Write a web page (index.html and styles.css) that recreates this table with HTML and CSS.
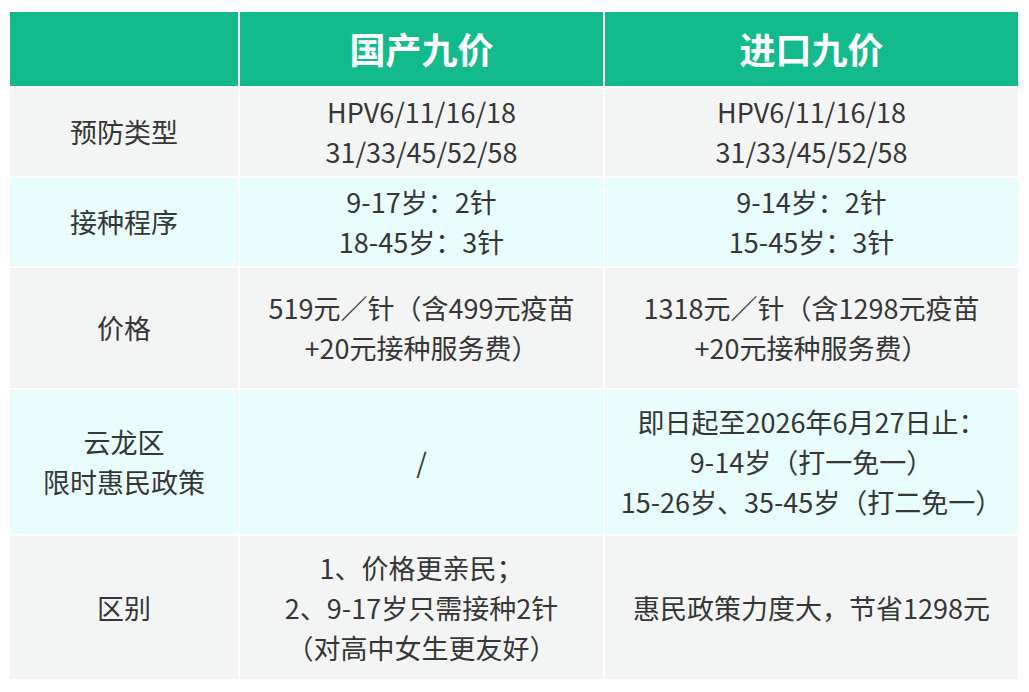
FILE: index.html
```html
<!DOCTYPE html>
<html lang="zh-CN">
<head>
<meta charset="utf-8">
<link rel="stylesheet" href="styles.css">
</head>
<body>
<div class="table">
  <div class="cell head"></div>
  <div class="cell head">国产九价</div>
  <div class="cell head">进口九价</div>

  <div class="cell gray">预防类型</div>
  <div class="cell gray">HPV6/11/16/18<br>31/33/45/52/58</div>
  <div class="cell gray">HPV6/11/16/18<br>31/33/45/52/58</div>

  <div class="cell cyan">接种程序</div>
  <div class="cell cyan">9-17岁：2针<br>18-45岁：3针</div>
  <div class="cell cyan">9-14岁：2针<br>15-45岁：3针</div>

  <div class="cell gray">价格</div>
  <div class="cell gray">519元／针（含499元疫苗<br>+20元接种服务费）</div>
  <div class="cell gray">1318元／针（含1298元疫苗<br>+20元接种服务费）</div>

  <div class="cell cyan">云龙区<br>限时惠民政策</div>
  <div class="cell cyan">/</div>
  <div class="cell cyan">即日起至2026年6月27日止：<br>9-14岁（打一免一）<br>15-26岁、35-45岁（打二免一）</div>

  <div class="cell gray">区别</div>
  <div class="cell gray">1、价格更亲民；<br>2、9-17岁只需接种2针<br>（对高中女生更友好）</div>
  <div class="cell gray">惠民政策力度大，节省1298元</div>
</div>
</body>
</html>
```

FILE: styles.css
```css
html, body {
  margin: 0;
  padding: 0;
  background: #ffffff;
}
body {
  padding: 12px 11px 0 10px;
  font-family: "Noto Sans CJK SC", "Noto Sans", sans-serif;
}
.table {
  display: grid;
  grid-template-columns: 228px 363px 413px;
  grid-template-rows: 74px 88px 88px 120px 144px 143px;
  gap: 2px;
  width: 1008px;
  background: #ffffff;
}
.cell {
  display: flex;
  align-items: center;
  justify-content: center;
  text-align: center;
  font-size: 27px;
  line-height: 40px;
  color: #363636;
}
.head {
  background: #13bb8c;
  color: #ffffff;
  font-size: 36px;
  font-weight: 700;
  padding-bottom: 2px;
}
.gray {
  background: #f3f5f5;
}
.cyan {
  background: #e8fdfc;
}
```
